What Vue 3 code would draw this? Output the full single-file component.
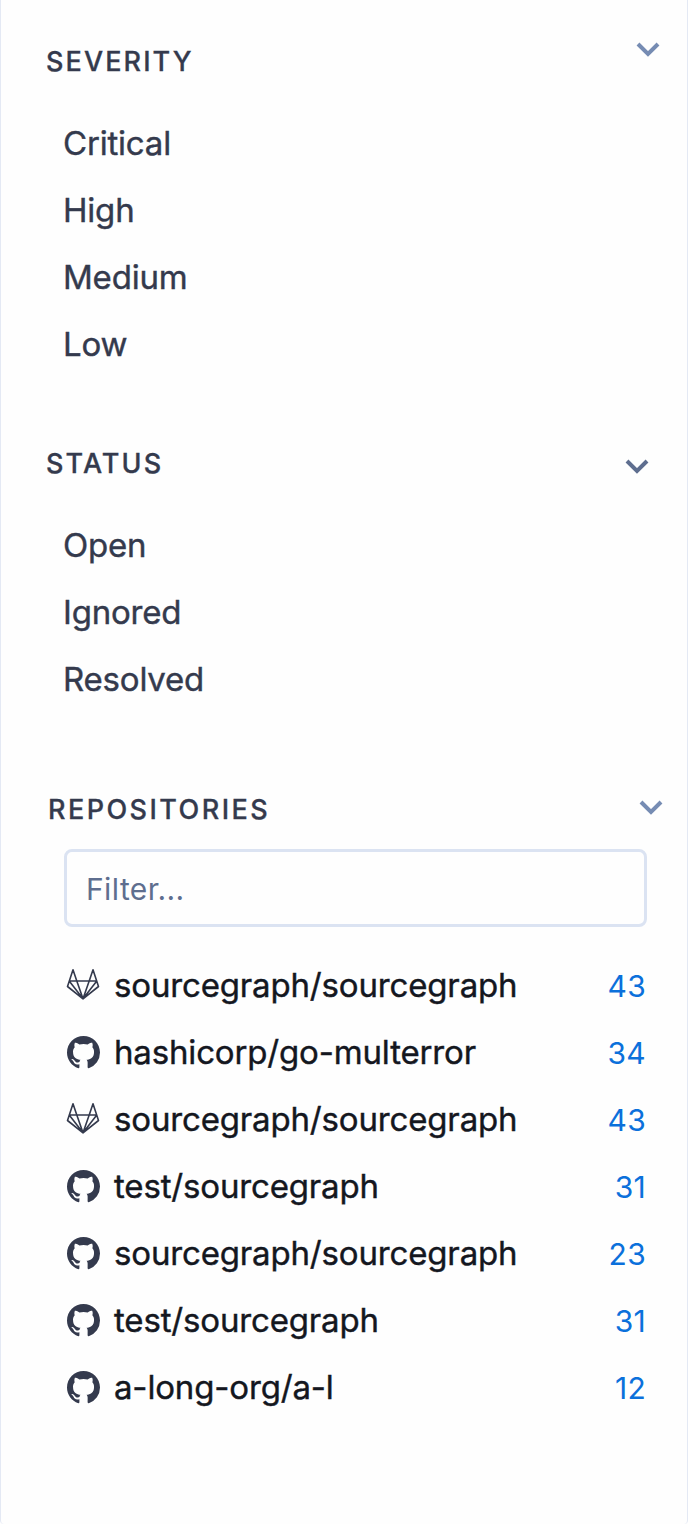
<script setup>
const severities = ['Critical', 'High', 'Medium', 'Low']
const statuses = ['Open', 'Ignored', 'Resolved']
const repositories = [
  { name: 'sourcegraph/sourcegraph', host: 'gitlab', count: 43 },
  { name: 'hashicorp/go-multerror', host: 'github', count: 34 },
  { name: 'sourcegraph/sourcegraph', host: 'gitlab', count: 43 },
  { name: 'test/sourcegraph', host: 'github', count: 31 },
  { name: 'sourcegraph/sourcegraph', host: 'github', count: 23 },
  { name: 'test/sourcegraph', host: 'github', count: 31 },
  { name: 'a-long-org/a-l', host: 'github', count: 12 },
]
</script>

<template>
  <aside class="panel">
    <section class="severity">
      <header class="head">
        <h2>SEVERITY</h2>
        <svg class="chevron" viewBox="0 0 24 16"><path d="M2 2 12 12 22 2" /></svg>
      </header>
      <ul class="options">
        <li v-for="s in severities" :key="s">{{ s }}</li>
      </ul>
    </section>

    <section class="status">
      <header class="head">
        <h2>STATUS</h2>
        <svg class="chevron" viewBox="0 0 24 16"><path d="M2 2 12 12 22 2" /></svg>
      </header>
      <ul class="options">
        <li v-for="s in statuses" :key="s">{{ s }}</li>
      </ul>
    </section>

    <section class="repositories">
      <header class="head">
        <h2>REPOSITORIES</h2>
        <svg class="chevron" viewBox="0 0 24 16"><path d="M2 2 12 12 22 2" /></svg>
      </header>
      <input class="filter" type="text" placeholder="Filter..." />
      <ul class="repos">
        <li v-for="(r, i) in repositories" :key="i">
          <svg v-if="r.host === 'gitlab'" class="icon gitlab" viewBox="0 0 34 34">
            <path d="M1.500 18.500 7 1.800 10.800 13H23.200L27 1.800 32.500 18.500 17 30.800ZM3.200 13H30.800M3.200 13 17 30.800 30.800 13M10.800 13 17 30.800 23.200 13" />
          </svg>
          <svg v-else class="icon github" viewBox="0 0 16 16">
            <path d="M8 0C3.580 0 0 3.580 0 8c0 3.540 2.290 6.530 5.470 7.590.4.070.55-.17.55-.38 0-.19-.01-.82-.01-1.490-2.010.37-2.530-.49-2.690-.94-.09-.23-.48-.94-.82-1.130-.28-.15-.68-.52-.01-.53.63-.01 1.080.58 1.230.82.72 1.210 1.870.87 2.330.66.07-.52.28-.87.51-1.070-1.780-.2-3.640-.89-3.640-3.950 0-.87.31-1.590.82-2.150-.08-.2-.36-1.020.08-2.120 0 0 .67-.21 2.200.82.64-.18 1.320-.27 2-.27s1.360.09 2 .27c1.530-1.040 2.200-.82 2.200-.82.44 1.100.16 1.920.08 2.120.51.56.82 1.270.82 2.150 0 3.070-1.870 3.750-3.650 3.950.29.25.54.73.54 1.480 0 1.070-.01 1.930-.01 2.200 0 .21.15.46.55.38A8.010 8.010 0 0 0 16 8c0-4.420-3.580-8-8-8Z" />
          </svg>
          <span class="name">{{ r.name }}</span>
          <span class="count">{{ r.count }}</span>
        </li>
      </ul>
    </section>
  </aside>
</template>

<style>
body { background: #fefefe; }
</style>

<style scoped>
.panel {
  box-sizing: border-box;
  height: 1524px;
  padding: 42px 0 0;
  border: solid #e4e9f4;
  border-width: 0 1px;
  border-radius: 0 0 4px 4px;
  background: #fefefe;
  color: #343a4d;
  font-family: Inter, "Liberation Sans", sans-serif;
  overflow: hidden;
}
h2 {
  margin: 0;
  font-size: 27px;
  line-height: 40px;
  font-weight: 500;
  letter-spacing: 2.1px;
  -webkit-text-stroke: 0.3px currentColor;
}
ul { margin: 0; padding: 0; list-style: none; }
.head {
  display: flex;
  justify-content: space-between;
  height: 40px;
  padding: 0 27px 0 45px;
}
.chevron {
  width: 24px;
  height: 16px;
  margin-top: 0;
  fill: none;
  stroke: #768cb3;
  stroke-width: 4;
}
.options { padding: 28px 0 0 62px; }
.options li {
  height: 67px;
  font-size: 33px;
  line-height: 67px;
  letter-spacing: -0.2px;
  -webkit-text-stroke: 0.4px currentColor;
}
.status { margin-top: 66px; }
.status .head { padding-right: 38px; }
.status .chevron { margin-top: 15px; stroke: #5e6e8f; }
.repositories { margin-top: 77px; }
.repositories .head { padding: 0 24px 0 47px; }
.repositories h2 { letter-spacing: 2.45px; }
.repositories .chevron { margin-top: 10px; }
.filter {
  display: block;
  box-sizing: border-box;
  width: 583px;
  height: 78px;
  margin: 19px 0 0 63px;
  padding: 2px 19px 0;
  border: 3px solid #dbe3f2;
  border-radius: 8px;
  background: #fefefe;
  font: 30px/40px Inter, sans-serif;
  letter-spacing: 0.4px;
  outline: none;
}
.filter::placeholder { color: #5e6e8f; opacity: 1; }
.repos { padding: 24px 41px 0 65px; }
.repos li { display: flex; align-items: center; height: 67px; }
.icon { flex: none; width: 34px; height: 34px; margin-right: 14px; }
.github { width: 33px; height: 33px; margin: 2px 14px 0 1px; fill: #343a4d; }
.gitlab { fill: none; stroke: #343a4d; stroke-width: 1.6; stroke-linejoin: round; }
.name {
  flex: 1;
  color: #14171f;
  font-size: 33px;
  letter-spacing: -0.16px;
  white-space: nowrap;
  -webkit-text-stroke: 0.4px currentColor;
}
.count { padding-top: 2px; color: #0b70db; font-size: 30px; letter-spacing: 0.3px; }
</style>
